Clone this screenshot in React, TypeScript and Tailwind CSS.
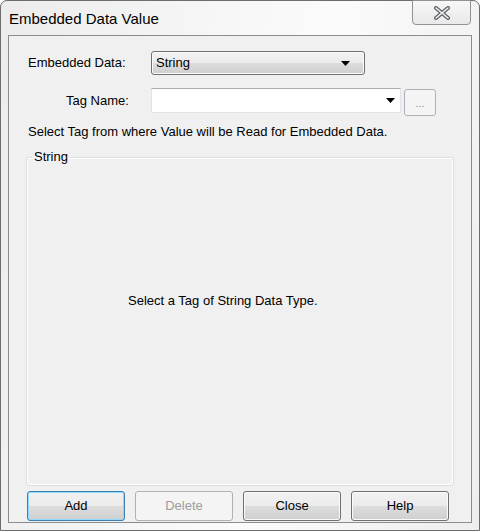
const font = "font-['Liberation_Sans',Arial,sans-serif]";

const btnFace =
  "bg-[linear-gradient(to_bottom,#f2f2f2_0%,#ebebeb_50%,#dddddd_50%,#cfcfcf_100%)]";

function DropArrow() {
  return (
    <svg width="9" height="5" viewBox="0 0 9 5" className="shrink-0">
      <path d="M0 0 H9 L4.5 5 Z" fill="#000" />
    </svg>
  );
}

function DialogButton({
  label,
  variant = "normal",
}: {
  label: string;
  variant?: "normal" | "default" | "disabled";
}) {
  if (variant === "disabled") {
    return (
      <button
        type="button"
        disabled
        className="h-[30px] w-[98px] rounded-[3px] border border-[#adb2b5] bg-[#f4f4f4] text-[13px] text-[#9c9c9c]"
      >
        {label}
      </button>
    );
  }
  return (
    <button
      type="button"
      className={`h-[30px] w-[98px] rounded-[3px] border text-[13px] text-black ${btnFace} ${
        variant === "default"
          ? "border-[#3c7fb1] shadow-[inset_0_0_0_1px_#8fd8ff]"
          : "border-[#707070] shadow-[inset_0_0_0_1px_#fbfbfb]"
      }`}
    >
      {label}
    </button>
  );
}

function CloseGlyph() {
  return (
    <svg width="18" height="14" viewBox="0 0 18 14">
      <path
        d="M3 2 L15 12 M15 2 L3 12"
        stroke="#5d6068"
        strokeWidth="4"
        strokeLinecap="round"
      />
      <path
        d="M3 2 L15 12 M15 2 L3 12"
        stroke="#f4f4f4"
        strokeWidth="1.6"
        strokeLinecap="round"
      />
    </svg>
  );
}

export default function App() {
  return (
    <div
      className={`${font} flex h-[531px] w-[480px] flex-col rounded-t-[7px] border border-[#6d6d6d] bg-[linear-gradient(100deg,#ececec_0%,#f8f8f8_45%,#fbfbfb_60%,#eeeeee_100%)] px-[7px] pb-[7px]`}
    >
      <div className="flex h-[34px] shrink-0 items-start justify-between">
        <span className="pl-[1px] pt-[8px] text-[15px] leading-[20px] text-black">
          Embedded Data Value
        </span>
        <div className="mr-[1px] mt-[-1px] flex h-[25px] w-[59px] items-center justify-center rounded-b-[4px] border border-[#8f9296] bg-[linear-gradient(to_bottom,#f7f7f7,#e9e9e9)]">
          <CloseGlyph />
        </div>
      </div>

      <div className="flex min-h-0 flex-1 flex-col border border-[#8a8c8f] bg-[#f0f0f0] text-[13px] leading-[16px] text-black">
        <div className="mt-[15px] flex items-center">
          <span className="ml-[19px] w-[123px]">Embedded Data:</span>
          <div
            className={`flex h-[24px] w-[214px] items-center justify-between rounded-[3px] border border-[#707070] pl-[4px] pr-[14px] ${btnFace} shadow-[inset_0_0_0_1px_#fbfbfb]`}
          >
            <span>String</span>
            <DropArrow />
          </div>
        </div>

        <div className="mt-[13px] flex items-start">
          <span className="ml-[57px] mt-[5px] w-[85px]">Tag Name:</span>
          <div className="flex h-[25px] w-[250px] items-center justify-end border border-[#e2e3ea] border-t-[#abadb3] bg-white pr-[5px]">
            <DropArrow />
          </div>
          <div className="ml-[3px] mt-[1px] flex h-[27px] w-[32px] items-center justify-center rounded-[3px] border border-[#adb2b5] bg-[#f4f4f4] text-[11px] text-[#8a8f99]">
            ...
          </div>
        </div>

        <p className="ml-[19px] mt-[8px]">
          Select Tag from where Value will be Read for Embedded Data.
        </p>

        <fieldset className="mx-[17px] mt-[9px] flex min-h-0 flex-1 flex-col rounded-[3px] border border-[#d5dfe5] shadow-[inset_0_0_0_1px_#ffffff]">
          <legend className="ml-[5px] px-[2px]">String</legend>
          <p className="pl-[101px] pt-[128px]">Select a Tag of String Data Type.</p>
        </fieldset>

        <div className="ml-[18px] mt-[5px] mb-[1px] flex gap-[10px]">
          <DialogButton label="Add" variant="default" />
          <DialogButton label="Delete" variant="disabled" />
          <DialogButton label="Close" />
          <DialogButton label="Help" />
        </div>
      </div>
    </div>
  );
}
